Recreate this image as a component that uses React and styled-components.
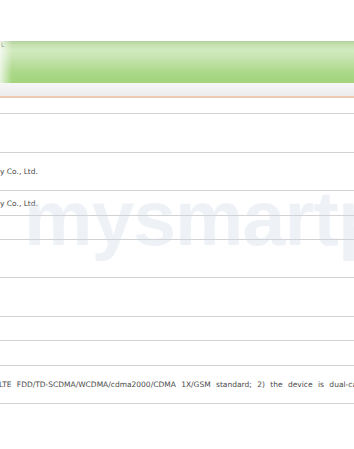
import styled, { createGlobalStyle } from "styled-components";

const Global = createGlobalStyle`
  html, body {
    margin: 0;
    padding: 0;
    background: #ffffff;
    overflow: hidden;
  }
`;

const Page = styled.div`
  position: relative;
  width: 354px;
  height: 449px;
  overflow: hidden;
  background: #ffffff;
  font-family: "DejaVu Sans", Verdana, sans-serif;
`;

const TopSpace = styled.div`
  height: 41px;
`;

const GreenBar = styled.div`
  position: relative;
  height: 42px;
  background: linear-gradient(
    to bottom,
    #b4d09f 0%,
    #c4e0ae 8%,
    #d2eac0 22%,
    #c6e4b0 40%,
    #b9dd9b 58%,
    #aad888 76%,
    #a3d47d 100%
  );
  &::before {
    content: "";
    position: absolute;
    left: 0;
    top: 0;
    bottom: 0;
    width: 12px;
    background: linear-gradient(to right, rgba(255, 255, 255, 0.75), rgba(255, 255, 255, 0));
  }
`;

const Corner = styled.span`
  position: absolute;
  left: 1px;
  top: 1px;
  font-size: 6px;
  color: #8a9a80;
  line-height: 1;
`;

const SubBar = styled.div`
  height: 13px;
  background: linear-gradient(to bottom, #f7f7f7, #ececec);
  border-bottom: 2px solid #f0cbb4;
`;

const Table = styled.div`
  display: flex;
  flex-direction: column;
`;

const Row = styled.div`
  height: ${(p) => p.$h}px;
  box-sizing: border-box;
  border-bottom: 1px solid #d2d2d2;
  display: flex;
  align-items: center;
  overflow: hidden;
`;

const Cell = styled.div`
  white-space: nowrap;
  font-size: 7.5px;
  color: #4a4a4a;
  word-spacing: ${(p) => p.$ws || 0}px;
  margin-left: ${(p) => p.$shift || 0}px;
`;

const Watermark = styled.div`
  position: absolute;
  left: 24px;
  top: 174px;
  font-family: "Liberation Sans", Arial, sans-serif;
  font-weight: bold;
  font-size: 77px;
  letter-spacing: -1px;
  color: rgba(205, 218, 232, 0.35);
  white-space: nowrap;
  pointer-events: none;
`;

const rows = [
  { h: 16 },
  { h: 39 },
  { h: 38, text: "y Co., Ltd." },
  { h: 25, text: "y Co., Ltd." },
  { h: 24 },
  { h: 38 },
  { h: 39 },
  { h: 24 },
  { h: 25 },
  {
    h: 38,
    text: "LTE FDD/TD-SCDMA/WCDMA/cdma2000/CDMA 1X/GSM standard; 2) the device is dual-card dual-standby",
    ws: 3,
    shift: -1,
  },
];

const App = () => (
  <Page>
    <Global />
    <TopSpace />
    <GreenBar>
      <Corner>L</Corner>
    </GreenBar>
    <SubBar />
    <Table>
      {rows.map((r, i) => (
        <Row key={i} $h={r.h}>
          {r.text && (
            <Cell $ws={r.ws} $shift={r.shift}>
              {r.text}
            </Cell>
          )}
        </Row>
      ))}
    </Table>
    <Watermark>mysmartp</Watermark>
  </Page>
);

export default App;
